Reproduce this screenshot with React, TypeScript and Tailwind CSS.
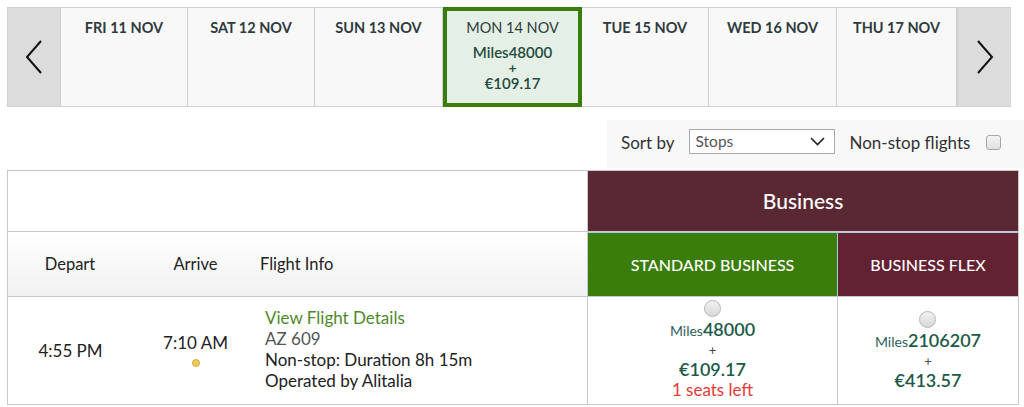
import React from 'react';

const days = [
  { label: 'FRI 11 NOV', w: 'w-[127px]' },
  { label: 'SAT 12 NOV', w: 'w-[127px]' },
  { label: 'SUN 13 NOV', w: 'w-[128px]' },
];
const daysAfter = [
  { label: 'TUE 15 NOV', w: 'w-[127px]' },
  { label: 'WED 16 NOV', w: 'w-[128px]' },
  { label: 'THU 17 NOV', w: 'w-[120px]' },
];

const Chevron: React.FC<{ dir: 'left' | 'right' }> = ({ dir }) => (
  <svg width="18" height="34" viewBox="0 0 18 34" fill="none">
    <polyline
      points={dir === 'left' ? '16,1 2,17 16,33' : '2,1 16,17 2,33'}
      stroke="#111"
      strokeWidth="2"
      strokeLinejoin="miter"
    />
  </svg>
);

const DayCell: React.FC<{ label: string; w: string }> = ({ label, w }) => (
  <div className={`${w} border-r border-[#d0d0d0] bg-[#f8f8f8] pt-[9px] text-center text-[14.5px] font-bold text-[#2f3b3d]`}>
    {label}
  </div>
);

const Radio: React.FC = () => (
  <div className="h-[17px] w-[17px] rounded-full border border-[#b5b5b5] bg-gradient-to-b from-[#f2f2f2] to-[#d8d8d8]" />
);

const Price: React.FC<{ miles: string; euro: string; seats?: string }> = ({ miles, euro, seats }) => (
  <div className="flex flex-col items-center">
    <Radio />
    <div className="mt-[1px] leading-[22px]">
      <span className="text-[14px] text-[#2e5f5c]">Miles</span>
      <span className="text-[18px] font-semibold text-[#1d5a48]">{miles}</span>
    </div>
    <div className="text-[13px] leading-[16px] text-[#444]">+</div>
    <div className="text-[18px] font-semibold leading-[22px] text-[#1d5a48]">{euro}</div>
    {seats && <div className="text-[17px] leading-[20px] text-[#e53935]">{seats}</div>}
  </div>
);

export default function App() {
  return (
    <div className="h-[407px] w-[1024px] overflow-hidden bg-white pl-[7px] pt-[7px] font-['Lato','Noto_Sans',sans-serif]">
      {/* date strip */}
      <div className="flex h-[100px] w-[1004px] border-y border-[#d0d0d0]">
        <div className="flex w-[54px] items-center justify-center border-x border-[#d0d0d0] bg-[#dcdcdc]">
          <Chevron dir="left" />
        </div>
        {days.map((d) => (
          <DayCell key={d.label} {...d} />
        ))}
        <div className="-my-px flex w-[139px] flex-col items-center border-4 border-[#3b7d0c] bg-[#e4efe5] pt-[6px] text-[#2f3b3d]">
          <div className="text-[14.5px] leading-[22px]">MON 14 NOV</div>
          <div className="mt-[5px] text-[15px] font-semibold leading-[16px] text-[#254a3d]">Miles48000</div>
          <div className="text-[14px] font-semibold leading-[15px] text-[#254a3d]">+</div>
          <div className="text-[15px] font-semibold leading-[16px] text-[#254a3d]">€109.17</div>
        </div>
        {daysAfter.map((d) => (
          <DayCell key={d.label} {...d} />
        ))}
        <div className="flex w-[54px] items-center justify-center border-l border-[#d0d0d0] bg-[#dcdcdc]">
          <Chevron dir="right" />
        </div>
      </div>

      {/* sort row */}
      <div className="flex h-[63px] justify-end">
        <div className="mt-[13px] flex h-[48px] w-[417px] items-start bg-[#f8f8f8] pt-[9px] pl-[14px] text-[17px] text-[#333]">
          <span className="mt-[1px]">Sort by</span>
          <div className="ml-[14px] flex h-[25px] w-[146px] items-center justify-between border border-[#aaa] bg-white pl-[6px] pr-[9px] text-[15.5px] text-[#555]">
            <span>Stops</span>
            <svg width="15" height="9" viewBox="0 0 15 9" fill="none">
              <polyline points="1,1 7.5,7.5 14,1" stroke="#222" strokeWidth="1.6" />
            </svg>
          </div>
          <span className="ml-[15px] mt-[1px]">Non-stop flights</span>
          <div className="ml-[16px] mt-[6px] h-[15px] w-[15px] rounded-[3px] border border-[#a8a8a8] bg-gradient-to-b from-[#f4f4f4] to-[#e0e0e0]" />
        </div>
      </div>

      {/* table */}
      <div className="w-[1012px] border border-[#c8c8c8]">
        <div className="flex h-[60px]">
          <div className="w-[580px] border-r border-[#c8c8c8] bg-white" />
          <div className="flex flex-1 items-center justify-center bg-[#5a2833] text-[21px] font-medium text-white">
            Business
          </div>
        </div>
        <div className="flex h-[65px] border-t border-[#c8c8c8]">
          <div className="flex w-[580px] items-center border-r border-[#c8c8c8] bg-gradient-to-b from-white to-[#f1f1f1] text-[16.5px] text-[#222]">
            <div className="w-[124px] text-center">Depart</div>
            <div className="w-[127px] text-center">Arrive</div>
            <div className="pl-[1px]">Flight Info</div>
          </div>
          <div className="flex w-[250px] items-center justify-center border-t border-r border-[#a9c9e4] bg-[#3b7d0a] text-[16px] font-medium text-white">
            STANDARD BUSINESS
          </div>
          <div className="flex flex-1 items-center justify-center border-t border-[#a9c9e4] bg-[#632232] text-[16px] font-medium text-white">
            BUSINESS FLEX
          </div>
        </div>
        <div className="flex h-[108px] border-t border-[#c8c8c8]">
          <div className="flex w-[580px] items-center border-r border-[#c8c8c8] text-[17px] text-[#222]">
            <div className="w-[124px] pl-[1px] text-center">4:55 PM</div>
            <div className="flex w-[127px] flex-col items-center pb-[2px]">
              <div className="leading-[22px]">7:10 AM</div>
              <div className="mt-[5px] h-[8px] w-[8px] rounded-full border border-[#d4ac3c] bg-[#ecc95a]" />
            </div>
            <div className="pl-[6px] pb-[3px] leading-[21px]">
              <div className="text-[#4d8a2c]">View Flight Details</div>
              <div className="text-[#555]">AZ 609</div>
              <div>Non-stop: Duration 8h 15m</div>
              <div>Operated by Alitalia</div>
            </div>
          </div>
          <div className="flex w-[250px] items-center justify-center border-r border-[#c8c8c8] pb-[2px]">
            <Price miles="48000" euro="€109.17" seats="1 seats left" />
          </div>
          <div className="flex flex-1 items-center justify-center">
            <Price miles="2106207" euro="€413.57" />
          </div>
        </div>
      </div>
    </div>
  );
}
